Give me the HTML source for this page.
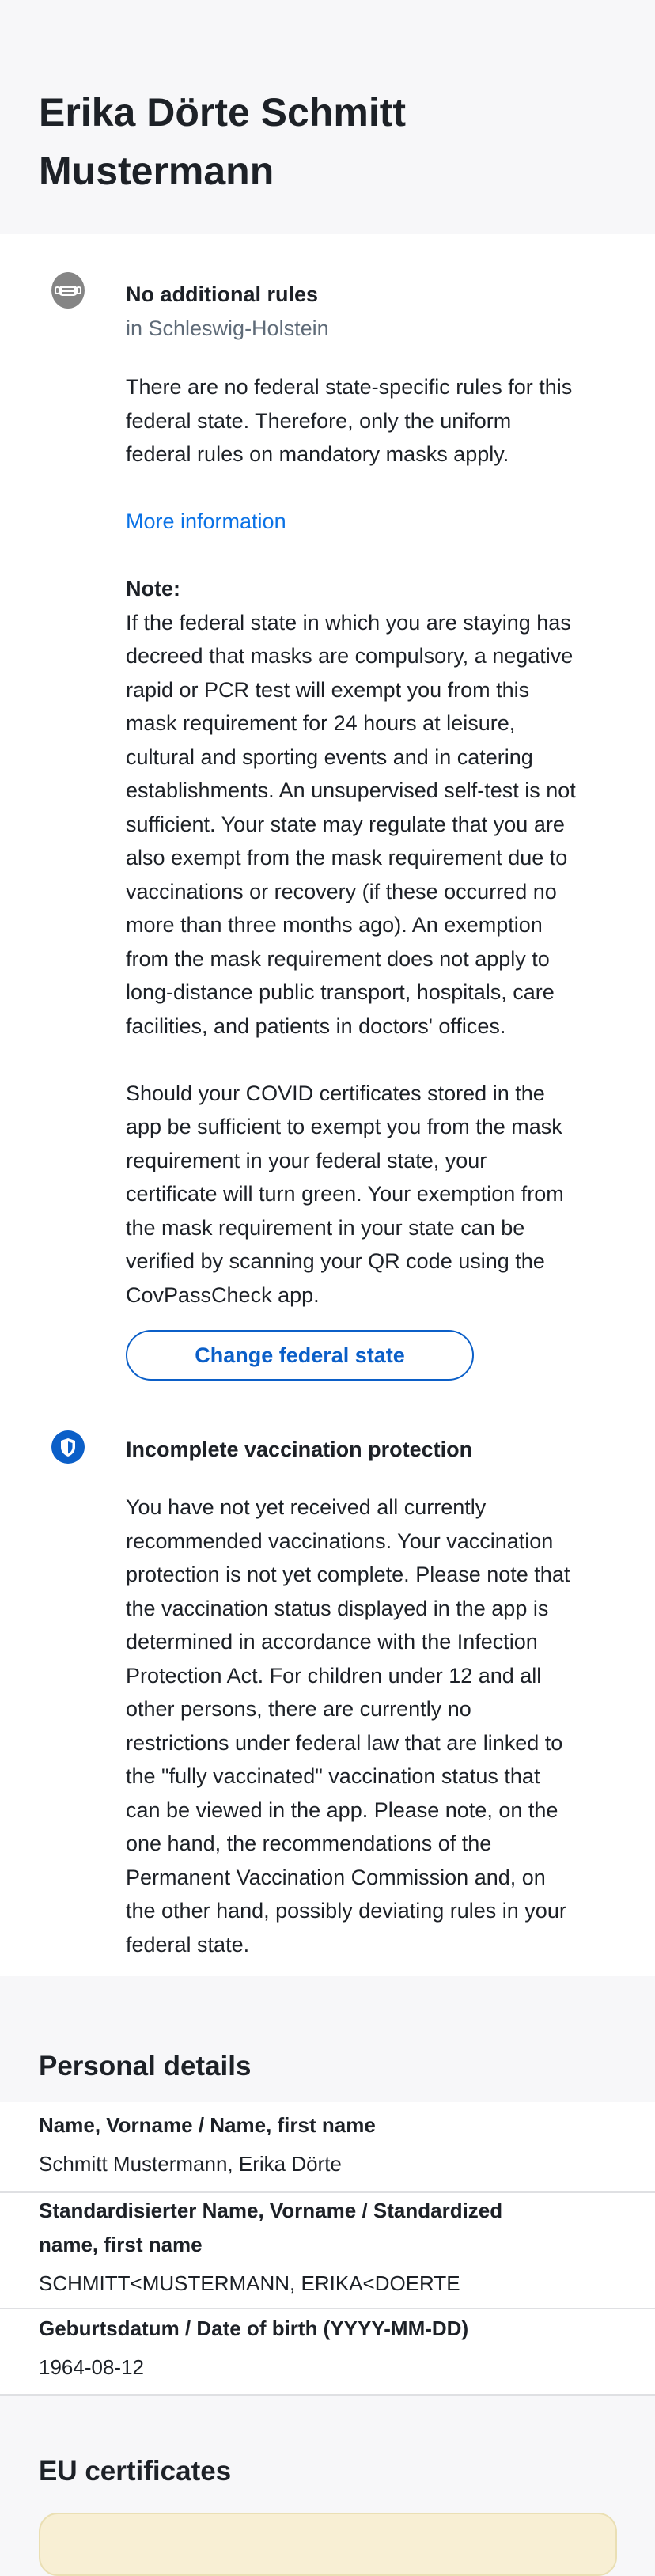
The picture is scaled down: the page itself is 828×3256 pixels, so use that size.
<!DOCTYPE html>
<html><head><meta charset="utf-8"><style>
*{margin:0;padding:0;box-sizing:border-box}
body{width:828px;height:3200px;overflow:hidden;background:#f7f7f9;font-family:"Liberation Sans","DejaVu Sans",sans-serif;color:#1d2127}
.abs{position:absolute;white-space:nowrap}
.hdr{position:absolute;left:0;top:0;width:828px;height:296px;background:#f7f7f9}
.white{position:absolute;left:0;top:296px;width:828px;height:2202px;background:#fff}
.t{font-size:27px;line-height:42.5px}
.b{font-weight:bold}
.rows{position:absolute;left:0;top:2657px;width:828px;height:370px;background:#fff}
.hr{position:absolute;left:0;width:828px;height:2px;background:#dfe0e3}
</style></head><body>
<div class="hdr"></div>
<div class="abs b" style="left:49px;top:105px;font-size:50px;line-height:74px;">Erika Dörte Schmitt<br>Mustermann</div>
<div class="white"></div>

<svg class="abs" style="left:64px;top:344px" width="44" height="46" viewBox="0 0 44 46"><ellipse cx="22" cy="23" rx="21" ry="23" fill="#858585"/><rect x="10" y="17" width="24" height="13" rx="5" fill="#fff"/><rect x="6" y="19" width="5" height="8" rx="2" fill="none" stroke="#fff" stroke-width="2"/><rect x="33" y="19" width="5" height="8" rx="2" fill="none" stroke="#fff" stroke-width="2"/><line x1="14" y1="21" x2="30" y2="21" stroke="#858585" stroke-width="2"/><line x1="14" y1="26" x2="30" y2="26" stroke="#858585" stroke-width="2"/></svg>

<div class="abs t b" style="left:159px;top:351px">No additional rules</div>
<div class="abs t" style="left:159px;top:394px;color:#5f6b78">in Schleswig-Holstein</div>
<div class="abs t" style="left:159px;top:468px">There are no federal state-specific rules for this<br>federal state. Therefore, only the uniform<br>federal rules on mandatory masks apply.</div>
<div class="abs t" style="left:159px;top:638px;color:#0a72e6">More information</div>
<div class="abs t" style="left:159px;top:723px"><b>Note:</b><br>If the federal state in which you are staying has<br>decreed that masks are compulsory, a negative<br>rapid or PCR test will exempt you from this<br>mask requirement for 24 hours at leisure,<br>cultural and sporting events and in catering<br>establishments. An unsupervised self-test is not<br>sufficient. Your state may regulate that you are<br>also exempt from the mask requirement due to<br>vaccinations or recovery (if these occurred no<br>more than three months ago). An exemption<br>from the mask requirement does not apply to<br>long-distance public transport, hospitals, care<br>facilities, and patients in doctors' offices.<br><br>Should your COVID certificates stored in the<br>app be sufficient to exempt you from the mask<br>requirement in your federal state, your<br>certificate will turn green. Your exemption from<br>the mask requirement in your state can be<br>verified by scanning your QR code using the<br>CovPassCheck app.</div>

<div class="abs b" style="left:159px;top:1681px;width:440px;height:64px;border:2px solid #0b5fc8;border-radius:32px;color:#0b5fc8;font-size:27px;line-height:60px;text-align:center">Change federal state</div>

<svg class="abs" style="left:64px;top:1807px" width="44" height="44" viewBox="0 0 44 44"><circle cx="22" cy="22" r="21" fill="#0b5fc8"/><path d="M22 11 L31 14 V22 C31 28 27 32 22 34 C17 32 13 28 13 22 V14 Z" fill="#fff"/><path d="M22 15 L27.5 17 V22 C27.5 26 25 29 22 30.5 Z" fill="#0b5fc8"/></svg>

<div class="abs t b" style="left:159px;top:1811px">Incomplete vaccination protection</div>
<div class="abs t" style="left:159px;top:1884px">You have not yet received all currently<br>recommended vaccinations. Your vaccination<br>protection is not yet complete. Please note that<br>the vaccination status displayed in the app is<br>determined in accordance with the Infection<br>Protection Act. For children under 12 and all<br>other persons, there are currently no<br>restrictions under federal law that are linked to<br>the "fully vaccinated" vaccination status that<br>can be viewed in the app. Please note, on the<br>one hand, the recommendations of the<br>Permanent Vaccination Commission and, on<br>the other hand, possibly deviating rules in your<br>federal state.</div>

<div class="abs b" style="left:49px;top:2590px;font-size:35px;line-height:44px">Personal details</div>
<div class="rows"></div>
<div class="abs t b" style="left:49px;top:2665px;font-size:26px">Name, Vorname / Name, first name</div>
<div class="abs t" style="left:49px;top:2714px;font-size:26px">Schmitt Mustermann, Erika Dörte</div>
<div class="hr" style="top:2770px"></div>
<div class="abs t b" style="left:49px;top:2773px;font-size:26px">Standardisierter Name, Vorname / Standardized<br>name, first name</div>
<div class="abs t" style="left:49px;top:2865px;font-size:26px">SCHMITT&lt;MUSTERMANN, ERIKA&lt;DOERTE</div>
<div class="hr" style="top:2917px"></div>
<div class="abs t b" style="left:49px;top:2922px;font-size:26px">Geburtsdatum / Date of birth (YYYY-MM-DD)</div>
<div class="abs t" style="left:49px;top:2971px;font-size:26px">1964-08-12</div>
<div class="hr" style="top:3026px"></div>

<div class="abs b" style="left:49px;top:3102px;font-size:35px;line-height:44px">EU certificates</div>
<div class="abs" style="left:49px;top:3176px;width:731px;height:80px;background:#f8efd4;border:2px solid #eadfb4;border-radius:24px"></div>
</body></html>
